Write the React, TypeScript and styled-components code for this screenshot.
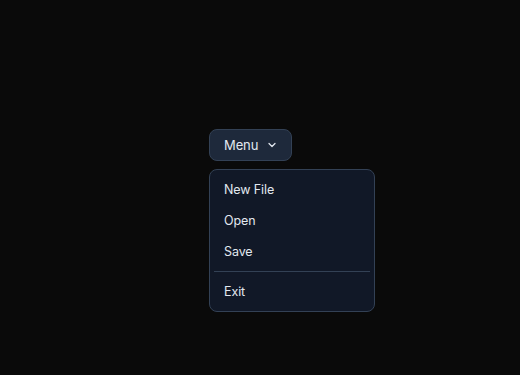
import React, { useState } from "react";
import styled, { createGlobalStyle } from "styled-components";
import { ChevronDown } from "lucide-react";

const GlobalStyle = createGlobalStyle`
  html, body {
    margin: 0;
    padding: 0;
    background: #0a0a0a;
  }
  body {
    font-family: Inter, "Noto Sans", sans-serif;
    -webkit-font-smoothing: antialiased;
  }
`;

const items = ["New File", "Open", "Save"];

const App: React.FC = () => {
  const [open, setOpen] = useState(true);

  return (
    <>
      <GlobalStyle />
      <Page>
        <Dropdown>
          <Trigger onClick={() => setOpen(!open)}>
            Menu
            <ChevronDown size={12} strokeWidth={2.5} />
          </Trigger>
          {open && (
            <Panel>
              {items.map((item) => (
                <Item key={item}>{item}</Item>
              ))}
              <Separator />
              <Item>Exit</Item>
            </Panel>
          )}
        </Dropdown>
      </Page>
    </>
  );
};

export default App;

const Page = styled.div`
  width: 520px;
  height: 375px;
  display: flex;
  justify-content: center;
  padding-top: 129px;
  box-sizing: border-box;
`;

const Dropdown = styled.div`
  display: flex;
  flex-direction: column;
  align-items: flex-start;
  gap: 8px;
  width: 166px;
  margin-left: 64px;
`;

const Trigger = styled.button`
  display: flex;
  align-items: center;
  gap: 8px;
  height: 32px;
  padding: 0 13px 0 14px;
  border-radius: 8px;
  border: 1px solid #334155;
  background: #1e293b;
  color: #e2e8f0;
  font-family: inherit;
  font-size: 13px;
  font-weight: 400;
  letter-spacing: -0.1px;
  cursor: pointer;

  svg {
    color: #e2e8f0;
  }
`;

const Panel = styled.div`
  width: 166px;
  box-sizing: border-box;
  padding: 4px;
  border-radius: 8px;
  border: 1px solid #334155;
  background: #111827;
`;

const Item = styled.div`
  height: 31px;
  display: flex;
  align-items: center;
  padding: 0 10px;
  border-radius: 6px;
  color: #e2e8f0;
  font-size: 12.5px;
  letter-spacing: -0.1px;
  cursor: pointer;

  &:hover {
    background: #1e293b;
  }
`;

const Separator = styled.div`
  height: 1px;
  margin: 4px 0;
  background: #334155;
`;
